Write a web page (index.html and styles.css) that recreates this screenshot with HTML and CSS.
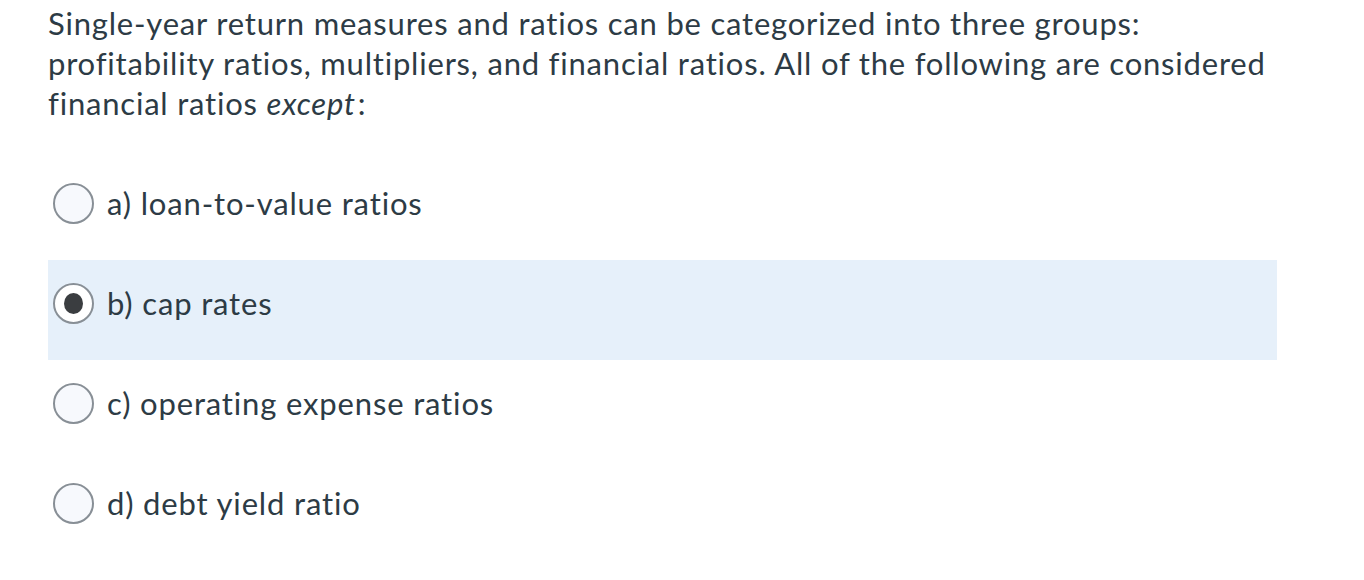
FILE: index.html
```html
<!DOCTYPE html>
<html>
<head>
<meta charset="utf-8">
<link rel="stylesheet" href="styles.css">
</head>
<body>
<div class="question">
  <p class="prompt">Single-year return measures and ratios can be categorized into three groups: profitability ratios, multipliers, and financial ratios. All of the following are considered financial ratios <em>except</em>:</p>
  <div class="answers">
    <div class="answer"><span class="radio"></span><span class="label">a) loan-to-value ratios</span></div>
    <div class="answer selected"><span class="radio"></span><span class="label">b) cap rates</span></div>
    <div class="answer"><span class="radio"></span><span class="label">c) operating expense ratios</span></div>
    <div class="answer"><span class="radio"></span><span class="label">d) debt yield ratio</span></div>
  </div>
</div>
</body>
</html>
```
FILE: styles.css
```css
html, body {
  margin: 0;
  padding: 0;
  background: #fff;
}
body {
  font-family: Lato, "Open Sans", sans-serif;
  color: #2d3b45;
}
.question {
  width: 1229px;
  padding-left: 48px;
}
.prompt {
  margin: 0;
  padding-top: 3px;
  font-size: 31px;
  letter-spacing: 0.8px;
  line-height: 40px;
  width: 1229px;
}
.prompt em {
  font-style: italic;
  padding-right: 2px;
}
.answers {
  margin-top: 37px;
  display: flex;
  flex-direction: column;
}
.answer {
  height: 100px;
  display: flex;
  align-items: flex-start;
  padding-top: 23px;
  box-sizing: border-box;
}
.answer.selected {
  background: #e6f0fa;
}
.radio {
  width: 37px;
  height: 37px;
  margin-left: 5px;
  border: 2px solid #888f96;
  border-radius: 50%;
  background: #f7f9fd;
  flex: none;
  display: flex;
  align-items: center;
  justify-content: center;
}
.selected .radio {
  background: #fff;
}
.selected .radio::after {
  content: "";
  width: 19px;
  height: 21px;
  border-radius: 50%;
  background: #3a3d40;
}
.label {
  margin-left: 13px;
  font-size: 31px;
  letter-spacing: 0.85px;
  line-height: 40px;
}
```
